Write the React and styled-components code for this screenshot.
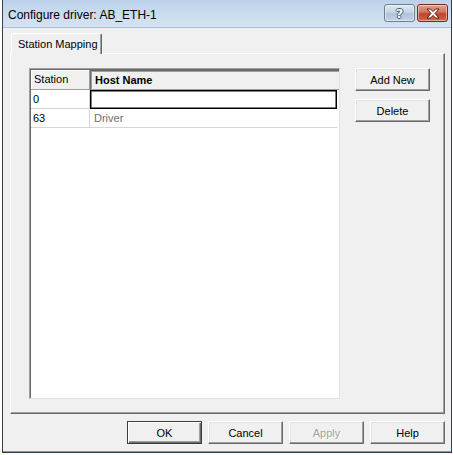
import React from 'react';
import styled, { createGlobalStyle, css } from 'styled-components';

const GlobalStyle = createGlobalStyle`
	html, body {
		margin: 0;
		padding: 0;
		background: #ffffff;
		overflow: hidden;
	}
	* {
		box-sizing: border-box;
	}
`;

const Screen = styled.div`
	width: 453px;
	height: 455px;
	padding-left: 2px;
	background: #ffffff;
	font-family: 'Liberation Sans', Arial, sans-serif;
	font-size: 11px;
	color: #000;
`;

const Window = styled.div`
	width: 450px;
	height: 453px;
	display: flex;
	flex-direction: column;
	border-left: 1px solid #3b3f45;
	border-right: 1px solid #3b3f45;
	border-bottom: 1px solid #2a3a48;
	background: #f0f0f0;
`;

const TitleBar = styled.div`
	height: 28px;
	flex: none;
	display: flex;
	align-items: flex-start;
	padding: 0 3px 0 5px;
	background: linear-gradient(to bottom, #bcd2ea 0%, #c9dcef 50%, #d5e3f2 100%);
	border-bottom: 1px solid #a9bed6;
`;

const Title = styled.div`
	font-size: 12px;
	line-height: 12px;
	margin-top: 9px;
	color: #000;
`;

const CaptionButtons = styled.div`
	margin-left: auto;
	margin-top: 4px;
	display: flex;
	gap: 2px;
`;

const CaptionButton = styled.div`
	width: 31px;
	height: 18px;
	display: flex;
	align-items: center;
	justify-content: center;
	border: 1px solid ${(p) => (p.$close ? '#6b2a22' : '#6f7f92')};
	border-radius: 3px;
	box-shadow: inset 0 0 0 1px rgba(255, 255, 255, 0.45);
	background: ${(p) =>
		p.$close
			? 'linear-gradient(to bottom, #e3a191 0%, #d3715d 45%, #c2412b 55%, #d0674f 100%)'
			: 'linear-gradient(to bottom, #dfe8f2 0%, #c6d5e6 45%, #aec3da 55%, #c3d4e8 100%)'};
`;

const HelpGlyph = styled.span`
	font-family: 'DejaVu Sans', sans-serif;
	font-weight: bold;
	font-size: 13px;
	line-height: 13px;
	color: #f4f7fb;
	text-shadow: 1px 0 #4c5d72, -1px 0 #4c5d72, 0 1px #4c5d72, 0 -1px #4c5d72;
`;

const Client = styled.div`
	flex: 1;
	display: flex;
	flex-direction: column;
	padding: 5px 6px 0 7px;
	background: #f0f0f0;
`;

const TabStrip = styled.div`
	display: flex;
	height: 20px;
	position: relative;
	z-index: 1;
`;

const Tab = styled.div`
	height: 21px;
	width: 91px;
	margin-left: 1px;
	padding: 4px 0 0 6px;
	background: #f0f0f0;
	border-top: 1px solid #ffffff;
	border-left: 1px solid #ffffff;
	border-right: 1px solid #696969;
	box-shadow: inset -1px 0 #a0a0a0;
	border-radius: 2px 2px 0 0;
	white-space: nowrap;
`;

const Panel = styled.div`
	height: 361px;
	flex: none;
	display: flex;
	align-items: flex-start;
	gap: 15px;
	padding: 14px 12px 13px 18px;
	border-top: 1px solid #ffffff;
	border-left: 1px solid #ffffff;
	border-right: 1px solid #696969;
	border-bottom: 1px solid #696969;
	box-shadow: inset -1px -1px #a0a0a0;
`;

const ListView = styled.div`
	width: 311px;
	height: 331px;
	background: #ffffff;
	border-top: 1px solid #a0a0a0;
	border-left: 1px solid #a0a0a0;
	border-right: 1px solid #e3e3e3;
	border-bottom: 1px solid #e3e3e3;
	box-shadow: inset 1px 1px #696969;
	padding: 1px 0 0 1px;
`;

const Row = styled.div`
	display: flex;
	height: ${(p) => (p.$header ? '20px' : '19px')};
`;

const HeaderCell = styled.div`
	width: ${(p) => p.$width}px;
	flex: ${(p) => (p.$grow ? 1 : 'none')};
	padding: 3px 0 0 ${(p) => p.$indent}px;
	background: #f0f0f0;
	border-bottom: 1px solid #a0a0a0;
	font-weight: ${(p) => (p.$bold ? 'bold' : 'normal')};
	${(p) =>
		p.$pressed
			? css`
					border-top: 1px solid #696969;
					border-left: 1px solid #696969;
					box-shadow: inset 1px 1px #a0a0a0;
			  `
			: css`
					border-right: 1px solid #a0a0a0;
					box-shadow: inset 1px 1px #ffffff;
			  `}
`;

const Cell = styled.div`
	width: ${(p) => p.$width}px;
	flex: ${(p) => (p.$grow ? 1 : 'none')};
	margin-right: ${(p) => (p.$grow ? 2 : 0)}px;
	padding: 3px 0 0 ${(p) => p.$indent}px;
	color: ${(p) => (p.$muted ? '#6d6d6d' : '#000')};
	border-bottom: 1px solid #d5d5d5;
	border-right: ${(p) => (p.$grow ? 'none' : '1px solid #d5d5d5')};
	white-space: nowrap;
`;

const EditCell = styled.div`
	flex: 1;
	margin-right: 2px;
	border: 1px solid #000;
	box-shadow: inset 0 0 0 0.5px #000;
	background: #ffffff;
`;

const SideButtons = styled.div`
	display: flex;
	flex-direction: column;
	gap: 8px;
`;

const Button = styled.div`
	width: 75px;
	height: 23px;
	display: flex;
	align-items: center;
	justify-content: center;
	background: #f0f0f0;
	color: ${(p) => (p.$disabled ? '#a0a0a0' : '#000')};
	text-shadow: ${(p) => (p.$disabled ? '1px 1px #ffffff' : 'none')};
	border-top: 1px solid ${(p) => (p.$default ? '#3c3c3c' : '#ffffff')};
	border-left: 1px solid ${(p) => (p.$default ? '#3c3c3c' : '#ffffff')};
	border-right: 1px solid ${(p) => (p.$default ? '#3c3c3c' : '#696969')};
	border-bottom: 1px solid ${(p) => (p.$default ? '#3c3c3c' : '#696969')};
	box-shadow: ${(p) =>
		p.$default
			? 'inset 1px 1px #ffffff, inset -1px -1px #696969, inset -2px -2px #a0a0a0'
			: 'inset -1px -1px #a0a0a0, inset 1px 1px #e3e3e3'};
	padding-top: 1px;
`;

const Footer = styled.div`
	display: flex;
	justify-content: flex-end;
	gap: 6px;
	padding-top: 7px;
	height: 37px;
`;

const BottomLine = styled.div`
	height: 1px;
	flex: none;
	background: #3cb4dc;
`;

const CloseIcon = () => (
	<svg width="14" height="11" viewBox="0 0 14 11">
		<path
			d="M1 1 H4.5 L7 3.6 L9.5 1 H13 L9 5.5 L13 10 H9.5 L7 7.4 L4.5 10 H1 L5 5.5 Z"
			fill="#ffffff"
			stroke="#5a2018"
			strokeWidth="1"
			strokeLinejoin="round"
		/>
	</svg>
);

const App = () => {
	return (
		<Screen>
			<GlobalStyle />
			<Window>
				<TitleBar>
					<Title>Configure driver: AB_ETH-1</Title>
					<CaptionButtons>
						<CaptionButton>
							<HelpGlyph>?</HelpGlyph>
						</CaptionButton>
						<CaptionButton $close>
							<CloseIcon />
						</CaptionButton>
					</CaptionButtons>
				</TitleBar>
				<Client>
					<TabStrip>
						<Tab>Station Mapping</Tab>
					</TabStrip>
					<Panel>
						<ListView>
							<Row $header>
								<HeaderCell $width={59} $indent={3}>
									Station
								</HeaderCell>
								<HeaderCell $grow $bold $pressed $indent={4}>
									Host Name
								</HeaderCell>
							</Row>
							<Row>
								<Cell $width={59} $indent={2}>
									0
								</Cell>
								<EditCell />
							</Row>
							<Row>
								<Cell $width={59} $indent={2}>
									63
								</Cell>
								<Cell $grow $muted $indent={4}>
									Driver
								</Cell>
							</Row>
						</ListView>
						<SideButtons>
							<Button>Add New</Button>
							<Button>Delete</Button>
						</SideButtons>
					</Panel>
					<Footer>
						<Button $default>OK</Button>
						<Button>Cancel</Button>
						<Button $disabled>Apply</Button>
						<Button>Help</Button>
					</Footer>
				</Client>
				<BottomLine />
			</Window>
		</Screen>
	);
};

export default App;
